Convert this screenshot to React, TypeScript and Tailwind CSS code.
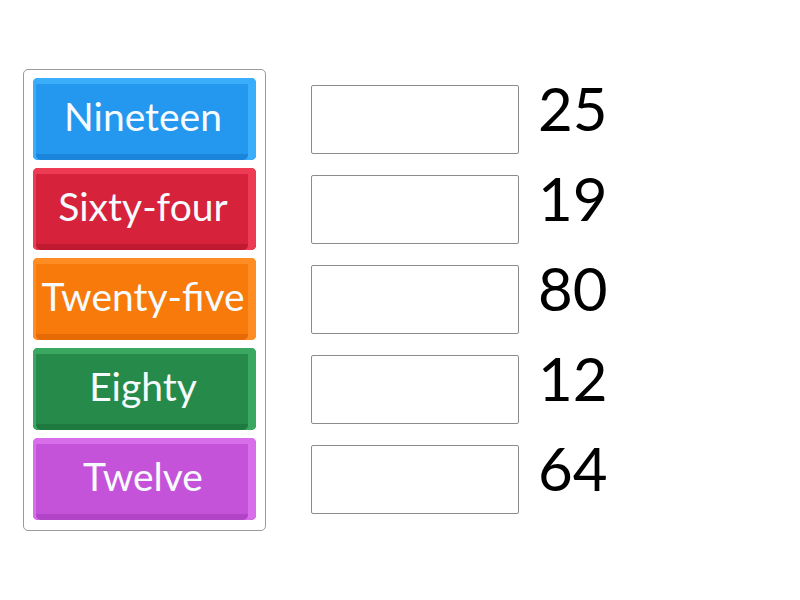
import React from 'react';

const tiles = [
    { label: 'Nineteen', cls: 'bg-[#2497ee] shadow-[inset_0_6px_0_#3aaefb,inset_-8px_0_0_#3aaefb,inset_3px_0_0_#3aaefb,inset_0_-6px_0_#1b85db]' },
    { label: 'Sixty-four', cls: 'bg-[#d6223b] shadow-[inset_0_6px_0_#ec3b52,inset_-8px_0_0_#ec3b52,inset_3px_0_0_#ec3b52,inset_0_-6px_0_#c01a31]' },
    { label: 'Twenty-five', cls: 'bg-[#f77a0a] shadow-[inset_0_6px_0_#ff8d24,inset_-8px_0_0_#ff8d24,inset_3px_0_0_#ff8d24,inset_0_-6px_0_#e66a05]' },
    { label: 'Eighty', cls: 'bg-[#268b4a] shadow-[inset_0_6px_0_#3ba862,inset_-8px_0_0_#3ba862,inset_3px_0_0_#3ba862,inset_0_-6px_0_#1e7a3e]' },
    { label: 'Twelve', cls: 'bg-[#c553d9] shadow-[inset_0_6px_0_#d86ee9,inset_-8px_0_0_#d86ee9,inset_3px_0_0_#d86ee9,inset_0_-6px_0_#b144c7]' },
];

const numbers = ['25', '19', '80', '12', '64'];

const App = () => {
    return (
        <div className="w-[800px] h-[600px] bg-white flex items-start pt-[69px] pl-[23px] font-['Lato',sans-serif]">
            <div className="w-[243px] border border-[#9a9a9a] rounded-[5px] pt-[8px] pb-[10px] px-[9px] flex flex-col gap-[8px]">
                {tiles.map((t) => (
                    <div
                        key={t.label}
                        className={`h-[82px] rounded-[5px] flex items-center justify-center text-[#f6fbff] text-[39px] leading-none whitespace-nowrap ${t.cls}`}
                    >
                        <span className="-mt-[6px] -ml-[3px]">{t.label}</span>
                    </div>
                ))}
            </div>
            <div className="ml-[45px] mt-[9px] flex flex-col gap-[8px]">
                {numbers.map((n) => (
                    <div key={n} className="h-[82px] flex items-center">
                        <div className="w-[208px] h-[69px] border border-[#8c8c8c] rounded-[2px] bg-white" />
                        <span className="ml-[19px] -mt-[22px] text-[60px] leading-none text-black">{n}</span>
                    </div>
                ))}
            </div>
        </div>
    );
};

export default App;
